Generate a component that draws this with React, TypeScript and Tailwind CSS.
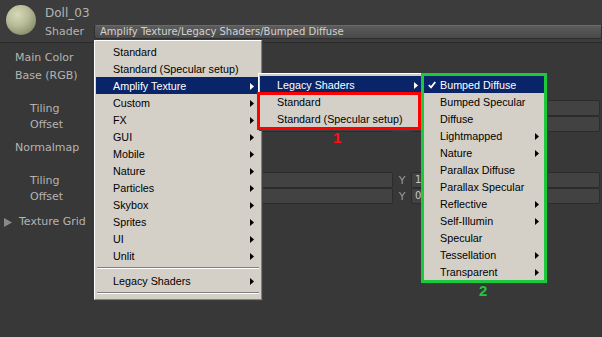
type MenuItem = { label: string; sub?: boolean; active?: boolean; checked?: boolean } | 'sep';

const mainItems: MenuItem[] = [
  { label: 'Standard' },
  { label: 'Standard (Specular setup)' },
  { label: 'Amplify Texture', sub: true, active: true },
  { label: 'Custom', sub: true },
  { label: 'FX', sub: true },
  { label: 'GUI', sub: true },
  { label: 'Mobile', sub: true },
  { label: 'Nature', sub: true },
  { label: 'Particles', sub: true },
  { label: 'Skybox', sub: true },
  { label: 'Sprites', sub: true },
  { label: 'UI', sub: true },
  { label: 'Unlit', sub: true },
  'sep',
  { label: 'Legacy Shaders', sub: true },
  'sep',
];

const amplifyItems: MenuItem[] = [
  { label: 'Legacy Shaders', sub: true, active: true },
  { label: 'Standard' },
  { label: 'Standard (Specular setup)' },
];

const legacyItems: MenuItem[] = [
  { label: 'Bumped Diffuse', active: true, checked: true },
  { label: 'Bumped Specular' },
  { label: 'Diffuse' },
  { label: 'Lightmapped', sub: true },
  { label: 'Nature', sub: true },
  { label: 'Parallax Diffuse' },
  { label: 'Parallax Specular' },
  { label: 'Reflective', sub: true },
  { label: 'Self-Illumin', sub: true },
  { label: 'Specular' },
  { label: 'Tessellation', sub: true },
  { label: 'Transparent', sub: true },
];

function Arrow({ white }: { white?: boolean }) {
  return (
    <svg width="4" height="7" viewBox="0 0 4 7" className="ml-auto mr-[6px] shrink-0">
      <path d="M0 0L4 3.5L0 7Z" fill={white ? '#ffffff' : '#000000'} />
    </svg>
  );
}

function Menu({ items, className }: { items: MenuItem[]; className: string }) {
  return (
    <div
      className={`absolute bg-[#d4d0c8] border border-t-white border-l-white border-r-[#808080] border-b-[#808080] shadow-[1px_1px_0_#404040] px-[1px] pt-[2px] font-['Liberation_Sans',Arial,sans-serif] text-[10.75px] text-black ${className}`}
    >
      {items.map((it, i) =>
        it === 'sep' ? (
          <div key={i} className="h-[8px] flex items-center px-[1px]">
            <div className="w-full border-t border-t-[#808080] border-b border-b-white" />
          </div>
        ) : (
          <div
            key={i}
            className={`flex items-center h-[17px] leading-[17px] pt-[1px] whitespace-nowrap ${
              it.active ? 'bg-[#0a246a] text-white' : ''
            }`}
          >
            <span className="w-[17px] shrink-0 flex justify-center">
              {it.checked && (
                <svg width="8" height="8" viewBox="0 0 8 8">
                  <path d="M0.8 4L3 6.3L7.3 1" stroke="#ffffff" strokeWidth="1.8" fill="none" />
                </svg>
              )}
            </span>
            <span>{it.label}</span>
            {it.sub && <Arrow white={it.active} />}
          </div>
        )
      )}
    </div>
  );
}

function VecRow({ label }: { label: string }) {
  const val = label === 'Tiling' ? '1' : '0';
  return (
    <div className="flex items-center h-[16px] leading-[13px]">
      <span className="w-[165px] pl-[30px] shrink-0">{label}</span>
      <span className="w-[10px] shrink-0 text-[#9a9a9a]">X</span>
      <div className="w-[218px] h-[16px] shrink-0 bg-[#424242] border border-[#2c2c2c] rounded-[2px] pl-[3px] text-[10px] leading-[14px] text-[#c8c8c8]">
        {val}
      </div>
      <span className="w-[18px] shrink-0 text-center text-[#9a9a9a]">Y</span>
      <div className="flex-1 mr-[2px] h-[16px] bg-[#424242] border border-[#2c2c2c] rounded-[2px] pl-[3px] text-[10px] leading-[14px] text-[#c8c8c8]">
        {val}
      </div>
    </div>
  );
}

export default function App() {
  return (
    <div className="relative w-[602px] h-[337px] overflow-hidden bg-[#383838] font-['DejaVu_Sans',sans-serif] text-[11px] text-[#b4b4b4]">
      {/* header */}
      <div className="flex h-[43px] bg-[#3c3c3c] border-b border-[#2a2a2a]">
        <div className="pl-[6px] pt-[5px] shrink-0">
          <div className="w-[30px] h-[30px] rounded-full bg-[radial-gradient(circle_at_38%_32%,#d6d9b8_0%,#b9bc97_40%,#8e9170_75%,#5f6148_100%)]" />
        </div>
        <div className="flex-1 pl-[9px] pt-[6px]">
          <div className="text-[12px] leading-[14px] text-[#b4b4b4]">Doll_03</div>
          <div className="flex items-center mt-[5px] h-[14px]">
            <span className="w-[49px] shrink-0 leading-[14px]">Shader</span>
            <div className="flex-1 h-[14px] rounded-l-[3px] border border-[#2e2e2e] border-t-[#6a6a6a] bg-[linear-gradient(#5c5c5c,#494949)] pl-[5px] text-[10px] leading-[12px] text-[#d2d2d2] whitespace-nowrap">
              Amplify Texture/Legacy Shaders/Bumped Diffuse
            </div>
          </div>
        </div>
      </div>

      {/* inspector body */}
      <div className="flex flex-col leading-[16px]">
        <div className="mt-[7px] h-[16px] pl-[15px]">Main Color</div>
        <div className="mt-[2px] h-[16px] pl-[15px]">Base (RGB)</div>
        <div className="mt-[16px]">
          <VecRow label="Tiling" />
          <VecRow label="Offset" />
        </div>
        <div className="mt-[8px] h-[16px] pl-[15px]">Normalmap</div>
        <div className="mt-[16px]">
          <VecRow label="Tiling" />
          <VecRow label="Offset" />
        </div>
        <div className="mt-[10px] h-[16px] flex items-center">
          <svg width="8" height="9" viewBox="0 0 8 9" className="ml-[4px] mr-[7px]">
            <path d="M0 0L8 4.5L0 9Z" fill="#8a8a8a" />
          </svg>
          <span>Texture Grid</span>
        </div>
      </div>

      {/* popup menus */}
      <Menu items={mainItems} className="left-[94px] top-[40px] w-[168px] h-[260px]" />
      <Menu items={amplifyItems} className="left-[258px] top-[73px] w-[168px] h-[57px]" />
      <Menu items={legacyItems} className="left-[421px] top-[73px] w-[126px] h-[210px]" />

      {/* annotations */}
      <div className="absolute left-[257px] top-[92px] w-[164px] h-[38px] border-[3px] border-[#ff0000]" />
      <div className="absolute left-[421px] top-[73px] w-[126px] h-[210px] border-[3px] border-[#1ec83c]" />
      <div className="absolute left-[333px] top-[129px] font-['Liberation_Sans',Arial,sans-serif] font-bold text-[15px] leading-[17px] text-[#ff1010]">
        1
      </div>
      <div className="absolute left-[479px] top-[282px] font-['Liberation_Sans',Arial,sans-serif] font-bold text-[15px] leading-[17px] text-[#1ec83c]">
        2
      </div>
    </div>
  );
}
